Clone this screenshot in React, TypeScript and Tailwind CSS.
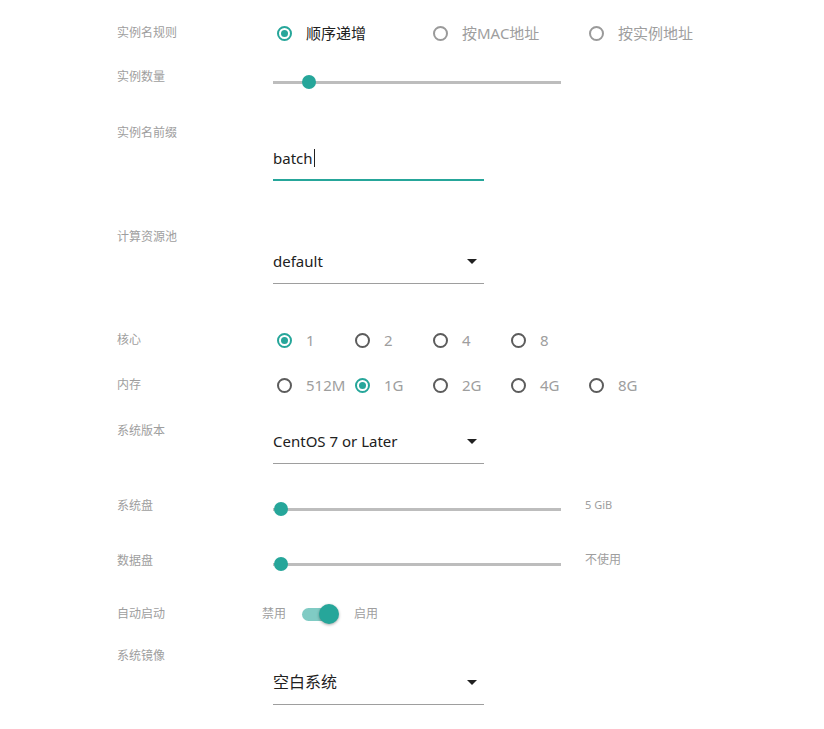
import React, { useState } from 'react';

const cjk = "font-['Noto_Sans','Noto_Sans_CJK_SC',sans-serif]";

// ラベル
const Label: React.FC<{ text: string; className?: string }> = ({ text, className = '' }) => (
  <div className={`w-[156px] shrink-0 text-[12px] leading-[16px] text-[#9e9e9e] ${className}`}>{text}</div>
);

interface RadioProps {
  checked: boolean;
  label: string;
  width: string;
  dark?: boolean;
  activeText?: boolean;
  onClick: () => void;
}

const Radio: React.FC<RadioProps> = ({ checked, label, width, dark, activeText, onClick }) => (
  <button className={`flex items-center ${width} text-left`} onClick={onClick}>
    <span
      className={`ml-[4px] flex h-[15px] w-[15px] items-center justify-center rounded-full border-2 ${
        checked ? 'border-[#26a69a]' : dark ? 'border-[#5c5c5c]' : 'border-[#9a9a9a]'
      }`}
    >
      {checked && <span className="h-[7px] w-[7px] rounded-full bg-[#26a69a]" />}
    </span>
    <span
      className={`ml-[14px] text-[15px] leading-[20px] ${
        checked && activeText ? 'text-[#212121]' : 'text-[#9e9e9e]'
      }`}
    >
      {label}
    </span>
  </button>
);

const Slider: React.FC<{ pos: number }> = ({ pos }) => (
  <div className="relative h-[30px] w-[288px]">
    <div className="absolute left-0 right-0 top-[13.5px] h-[3px] bg-[#bdbdbd]" />
    <div
      className="absolute top-[8px] h-[14px] w-[14px] -translate-x-1/2 rounded-full bg-[#26a69a]"
      style={{ left: pos }}
    />
  </div>
);

const Select: React.FC<{ value: string; big?: boolean; className?: string }> = ({ value, big, className = '' }) => (
  <div className={`flex w-[211px] items-center justify-between border-b border-[#9e9e9e] pb-[10px] ${className}`}>
    <span className={`${big ? 'text-[16px]' : 'text-[15px]'} leading-[24px] text-[#212121]`}>{value}</span>
    <svg width="10" height="5" viewBox="0 0 10 5" className="mr-[7px]">
      <path d="M0 0h10L5 5z" fill="#212121" />
    </svg>
  </div>
);

const App: React.FC = () => {
  const [rule, setRule] = useState(0);
  const [core, setCore] = useState('1');
  const [mem, setMem] = useState('1G');
  const [autoStart, setAutoStart] = useState(true);

  const rules = ['顺序递增', '按MAC地址', '按实例地址'];

  return (
    <div className={`min-h-[729px] w-[824px] bg-white pl-[117px] ${cjk}`}>
      {/* 实例名规则 */}
      <div className="mt-[23px] flex h-[20px] items-center">
        <Label text="实例名规则" />
        <div className="flex">
          {rules.map((r, i) => (
            <Radio key={r} checked={rule === i} label={r} width="w-[156px]" activeText onClick={() => setRule(i)} />
          ))}
        </div>
      </div>

      {/* 实例数量 */}
      <div className="mt-[24px] flex items-start">
        <Label text="实例数量" className="mt-[2px]" />
        <Slider pos={36} />
      </div>

      {/* 实例名前缀 */}
      <div className="mt-[28px] flex items-start">
        <Label text="实例名前缀" />
        <div className="mt-[21px] w-[211px] border-b-2 border-[#26a69a] pb-[9px]">
          <span className="text-[15px] leading-[24px] text-[#212121]">batch</span>
          <span className="ml-[1px] inline-block h-[18px] w-px translate-y-[3px] bg-[#212121]" />
        </div>
      </div>

      {/* 计算资源池 */}
      <div className="mt-[48px] flex items-start">
        <Label text="计算资源池" />
        <Select value="default" className="mt-[20px]" />
      </div>

      {/* 核心 */}
      <div className="mt-[46px] flex h-[20px] items-center">
        <Label text="核心" />
        <div className="flex">
          {['1', '2', '4', '8'].map(c => (
            <Radio key={c} checked={core === c} label={c} width="w-[78px]" dark onClick={() => setCore(c)} />
          ))}
        </div>
      </div>

      {/* 内存 */}
      <div className="mt-[25px] flex h-[20px] items-center">
        <Label text="内存" />
        <div className="flex">
          {['512M', '1G', '2G', '4G', '8G'].map(m => (
            <Radio key={m} checked={mem === m} label={m} width="w-[78px]" dark onClick={() => setMem(m)} />
          ))}
        </div>
      </div>

      {/* 系统版本 */}
      <div className="mt-[28px] flex items-start">
        <Label text="系统版本" />
        <Select value="CentOS 7 or Later" className="mt-[6px]" />
      </div>

      {/* 系统盘 */}
      <div className="mt-[30px] flex items-start">
        <Label text="系统盘" className="mt-[4px]" />
        <Slider pos={8} />
        <span className="ml-[24px] mt-[3px] text-[11px] leading-[16px] text-[#9e9e9e]">5 GiB</span>
      </div>

      {/* 数据盘 */}
      <div className="mt-[25px] flex items-start">
        <Label text="数据盘" className="mt-[4px]" />
        <Slider pos={8} />
        <span className="ml-[24px] mt-[3px] text-[12px] leading-[16px] text-[#9e9e9e]">不使用</span>
      </div>

      {/* 自动启动 */}
      <div className="mt-[25px] flex h-[20px] items-center">
        <div className="w-[145px] shrink-0 text-[12px] leading-[16px] text-[#9e9e9e]">自动启动</div>
        <span className="text-[12px] leading-[16px] text-[#9e9e9e]">禁用</span>
        <button
          className="relative ml-[16px] h-[20px] w-[37px]"
          onClick={() => setAutoStart(v => !v)}
          aria-label="自动启动"
        >
          <span className={`absolute left-0 top-[4px] h-[13px] w-[34px] rounded-full ${autoStart ? 'bg-[#80cbc4]' : 'bg-[#bdbdbd]'}`} />
          <span
            className={`absolute top-0 h-[20px] w-[20px] rounded-full shadow-[0_1px_3px_rgba(0,0,0,0.35)] ${
              autoStart ? 'left-[17px] bg-[#26a69a]' : 'left-0 bg-[#f5f5f5]'
            }`}
          />
        </button>
        <span className="ml-[15px] text-[12px] leading-[16px] text-[#9e9e9e]">启用</span>
      </div>

      {/* 系统镜像 */}
      <div className="mt-[24px] flex items-start">
        <Label text="系统镜像" />
        <Select value="空白系统" big className="mt-[22px]" />
      </div>
    </div>
  );
};

export default App;
